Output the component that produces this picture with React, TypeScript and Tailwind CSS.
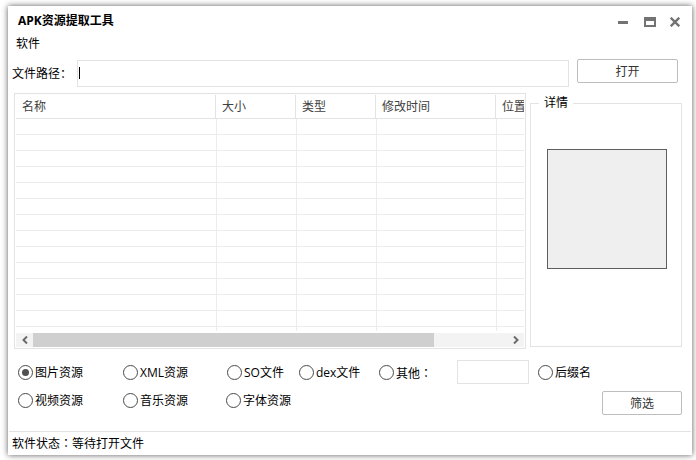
import React, { useState } from "react";

const columns = ["名称", "大小", "类型", "修改时间", "位置"];
const rows = Array.from({ length: 14 }, (_, i) => i);

function CenteredColon() {
  return <span className="font-['Noto_Sans_CJK_TC',sans-serif]">：</span>;
}

function TypeRadio({
  label,
  value,
  selected,
  onSelect,
  children,
}: {
  label: string;
  value: string;
  selected: string;
  onSelect: (value: string) => void;
  children?: React.ReactNode;
}) {
  return (
    <label className="flex h-4 items-center gap-[2px] whitespace-nowrap">
      <input
        type="radio"
        name="resource-type"
        value={value}
        checked={selected === value}
        onChange={() => onSelect(value)}
        className="size-[15px] shrink-0 appearance-none rounded-full border border-[#4a4a4a] bg-clip-content p-[3px] checked:bg-[#505050]"
      />
      <span className="pt-[2px]">
        {label}
        {children}
      </span>
    </label>
  );
}

export default function App() {
  const [type, setType] = useState("image");
  const [path, setPath] = useState("");

  return (
    <div className="bg-white pt-[6px] pr-1 pb-[6px] pl-2 font-['Open_Sans','Noto_Sans_CJK_SC',sans-serif] text-[12px] leading-4 text-black">
      <main className="bg-white shadow-[0_0_6px_rgba(0,0,0,0.65)]">
        <header className="flex h-7 items-center justify-between pr-3 pl-[10px]">
          <h1 className="pt-[2px] font-bold">APK资源提取工具</h1>
          <div className="flex items-center gap-[14px] text-[#737373]">
            <button aria-label="最小化" className="pt-1 pr-[2px]">
              <svg width="10" height="3" viewBox="0 0 10 3" className="block">
                <path d="M0 0h10v3H0z" fill="currentColor" />
              </svg>
            </button>
            <button aria-label="最大化" className="pt-1">
              <svg width="12" height="10" viewBox="0 0 12 10" className="block">
                <path d="M0 0h12v10H0zM2 4v4h8V4z" fill="currentColor" fillRule="evenodd" />
              </svg>
            </button>
            <button aria-label="关闭" className="pt-1">
              <svg width="10" height="10" viewBox="0 0 10 10" className="block">
                <path d="M0.7 0.7L9.3 9.3M9.3 0.7L0.7 9.3" stroke="currentColor" strokeWidth="2.4" />
              </svg>
            </button>
          </div>
        </header>

        <nav className="flex h-[18px] items-center pl-2">
          <button className="pt-[2px]">软件</button>
        </nav>

        <div className="flex items-start pt-[7px] pr-[14px] pl-1">
          <label htmlFor="path" className="w-[65px] shrink-0 pt-[7px] whitespace-nowrap">
            文件路径：
          </label>
          <div className="relative mt-px flex-1">
            <input
              id="path"
              value={path}
              onChange={(e) => setPath(e.target.value)}
              className="block h-[27px] w-full border border-[#e3e3e3] px-1 outline-none"
            />
            {path === "" && <span className="absolute top-[7px] left-[2px] h-3 w-px bg-black" />}
          </div>
          <button className="ml-2 h-6 w-[101px] rounded-[2px] border border-[#bdbdbd] pt-px text-[#333]">打开</button>
        </div>

        <div className="flex gap-1 pt-[6px] pr-[10px] pl-[6px]">
          <section className="min-w-0 flex-1 border border-[#e3e3e3] p-px">
            <div className="h-[236px] overflow-hidden">
              <table className="w-full min-w-[600px] table-fixed border-separate border-spacing-0 text-left">
                <colgroup>
                  <col className="w-[200px]" />
                  <col className="w-[80px]" />
                  <col className="w-[80px]" />
                  <col className="w-[120px]" />
                  <col />
                </colgroup>
                <thead>
                  <tr className="h-6">
                    {columns.map((name) => (
                      <th
                        key={name}
                        className="border-r border-b border-[#e3e3e3] p-0 pl-[6px] font-normal text-[#404040]"
                      >
                        {name}
                      </th>
                    ))}
                  </tr>
                </thead>
                <tbody>
                  {rows.map((row) => (
                    <tr key={row} className="h-4">
                      {columns.map((name) => (
                        <td key={name} className="border-b border-l border-[#ececec] p-0 first:border-l-0" />
                      ))}
                    </tr>
                  ))}
                </tbody>
              </table>
            </div>
            <div className="mt-[2px] flex h-[14px] bg-[#f3f3f3] text-[#6b6b6b]">
              <button aria-label="向左滚动" className="flex w-[17px] items-center justify-center">
                <svg width="6" height="8" viewBox="0 0 6 8">
                  <path d="M5 0.5L1.5 4L5 7.5" fill="none" stroke="currentColor" strokeWidth="2" />
                </svg>
              </button>
              <div className="flex-1">
                <div className="h-full w-11/13 bg-[#cfcfcf]" />
              </div>
              <button aria-label="向右滚动" className="flex w-[17px] items-center justify-center">
                <svg width="6" height="8" viewBox="0 0 6 8">
                  <path d="M1 0.5L4.5 4L1 7.5" fill="none" stroke="currentColor" strokeWidth="2" />
                </svg>
              </button>
            </div>
          </section>

          <fieldset className="mt-[2px] mb-[2px] w-[152px] shrink-0 border border-[#e3e3e3] pr-[6px] pl-2">
            <legend className="px-[5px]">详情</legend>
            <div className="mx-auto mt-[38px] size-[120px] border border-[#5e5e5e] bg-[#efefef]" />
          </fieldset>
        </div>

        <div className="grid grid-cols-[105px_104px_72px_80px_78px_81px_1fr] items-center pt-[11px] pr-[10px] pl-[10px]">
          <TypeRadio label="图片资源" value="image" selected={type} onSelect={setType} />
          <TypeRadio label="XML资源" value="xml" selected={type} onSelect={setType} />
          <TypeRadio label="SO文件" value="so" selected={type} onSelect={setType} />
          <TypeRadio label="dex文件" value="dex" selected={type} onSelect={setType} />
          <TypeRadio label="其他" value="other" selected={type} onSelect={setType}>
            <CenteredColon />
          </TypeRadio>
          <input aria-label="其他" className="h-6 w-[72px] border border-[#e3e3e3] px-1 outline-none" />
          <TypeRadio label="后缀名" value="suffix" selected={type} onSelect={setType} />
        </div>
        <div className="grid grid-cols-[105px_103px_1fr_80px] pt-[7px] pr-[10px] pb-4 pl-[10px]">
          <div className="pt-px">
            <TypeRadio label="视频资源" value="video" selected={type} onSelect={setType} />
          </div>
          <div className="pt-px">
            <TypeRadio label="音乐资源" value="audio" selected={type} onSelect={setType} />
          </div>
          <div className="pt-px">
            <TypeRadio label="字体资源" value="font" selected={type} onSelect={setType} />
          </div>
          <button className="h-6 rounded-[2px] border border-[#bdbdbd] pt-px text-[#333]">筛选</button>
        </div>

        <footer className="mx-px border-t border-[#e3e3e3] py-[3px] pl-[3px]">
          软件状态
          <CenteredColon />
          等待打开文件
        </footer>
      </main>
    </div>
  );
}
